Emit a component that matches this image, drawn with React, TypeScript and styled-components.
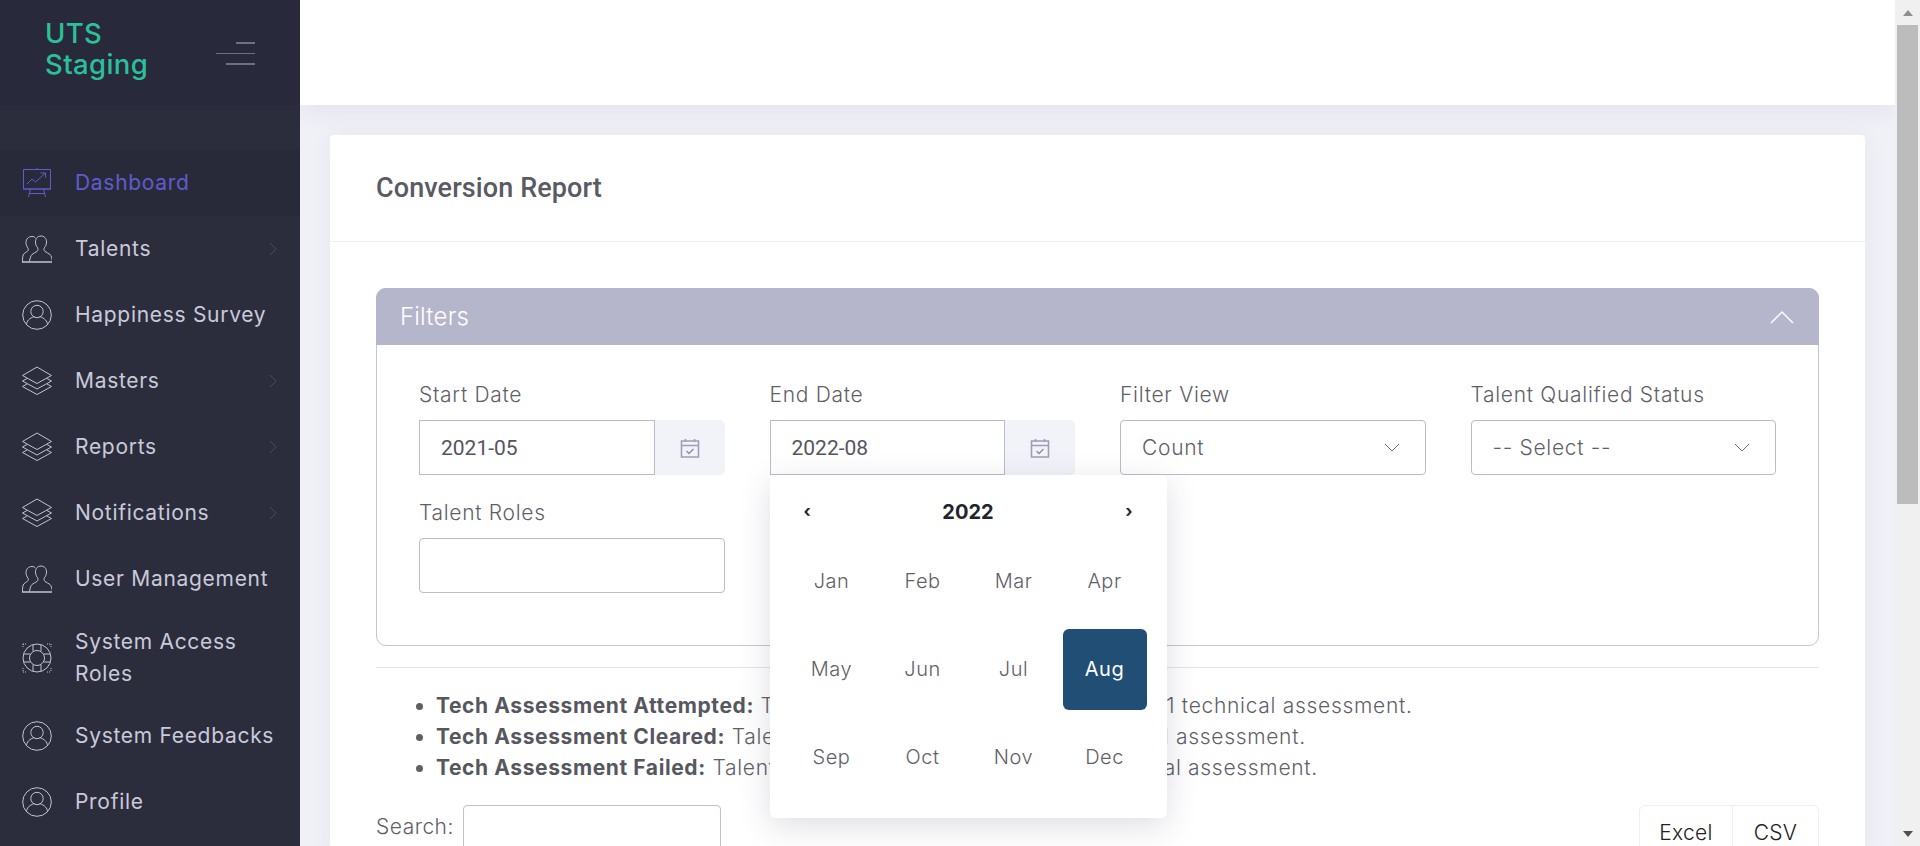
import styled, { createGlobalStyle } from "styled-components";
import { ReactNode } from "react";

const GlobalStyle = createGlobalStyle`
  html, body {
    margin: 0;
    height: 100%;
    overflow: hidden;
  }
  * {
    box-sizing: border-box;
  }
  body {
    font-family: "Inter", "Liberation Sans", sans-serif;
    color: #6a6a75;
  }
`;

const IconChart = () => (
  <svg width="30" height="30" viewBox="0 0 30 30" fill="none" stroke="#5f5ccb" strokeWidth="1">
    <path d="M1.500 1.500h27v19.500h-27zM15 0v1.500M1 21h28" />
    <path d="M5 16l5-5 3.500 3L23 5.500M18.500 5H23.500V9.500" />
    <path d="M8.500 21L6.500 29M21.500 21L23.500 29M7.500 25.500h15" />
  </svg>
);

const IconUsers = () => (
  <svg width="30" height="30" viewBox="0 0 30 30" fill="none" stroke="#c3c3d2" strokeWidth="1">
    <path d="M19 2c-3.200 0-5.500 2.400-5.500 6 0 2.600 1 4.600 2.200 5.800.5 1.300.3 2.800-.6 3.600-1.300 1.100-3.600 1.800-5 3-1.100.9-2.100 3.600-2.600 7" />
    <path d="M19 2c3.200 0 5.500 2.400 5.500 6 0 2.600-1 4.600-2.200 5.800-.5 1.300-.3 2.800.6 3.600 1.300 1.100 3.600 1.800 5 3 1.100.9 2.100 3.600 2.600 7" />
    <path d="M13.500 4c-1-1-2-1.500-3.500-1.500-3.500 0-6 2.500-6 6 0 2.600 1 4.400 2 5.500.5 1.200.3 2.500-.5 3.200C4.500 18.200 2 19 1.200 21 .6 22.500.5 25 .5 28" />
    <path d="M0 28h30" strokeWidth="1.500" />
  </svg>
);

const IconPerson = () => (
  <svg width="30" height="30" viewBox="0 0 30 30" fill="none" stroke="#c3c3d2" strokeWidth="1">
    <circle cx="15" cy="15" r="14.300" />
    <circle cx="15" cy="11.500" r="6.200" />
    <path d="M4.500 25c0-4 3-7 8-8.500M25.500 25c0-4-3-7-8-8.500" />
  </svg>
);

const IconLayers = () => (
  <svg width="30" height="30" viewBox="0 0 30 30" fill="none" stroke="#c3c3d2" strokeWidth="1">
    <path d="M15 1L29.500 9.500 15 17.500 0.500 9.500z" />
    <path d="M5 12.500L0.500 15 15 23 29.500 15 25 12.500" />
    <path d="M5 18L0.500 20.500 15 28.500 29.500 20.500 25 18" />
  </svg>
);

const IconLifebuoy = () => (
  <svg width="30" height="30" viewBox="0 0 30 30" fill="none" stroke="#c3c3d2" strokeWidth="1">
    <circle cx="15" cy="15" r="14" />
    <circle cx="15" cy="15" r="7.500" />
    <path d="M11 2v6M19 2v6M11 22v6M19 22v6M2 11h6M2 19h6M22 11h6M22 19h6" />
    <path d="M1 1h4M25 1h4M1 29h4M25 29h4M1 1v4M29 1v4M1 25v4M29 25v4" strokeDasharray="1 1" />
  </svg>
);

const IconCalendar = () => (
  <svg width="20" height="20" viewBox="0 0 20 20" fill="none" stroke="#a09db8" strokeWidth="1.600">
    <path d="M1.500 3h17v16h-17zM1.500 7.500h17" />
    <path d="M5.500 1v3M14.500 1v3" />
    <path d="M6.500 13l2.500 2.500L13.500 11" stroke="#8d8aa8" strokeWidth="1.400" />
  </svg>
);

const Chevron = () => (
  <svg width="16" height="9" viewBox="0 0 16 9" fill="none" stroke="#6a6a75" strokeWidth="1">
    <path d="M1 1l7 7 7-7" />
  </svg>
);

const NavArrow = () => (
  <svg width="8" height="14" viewBox="0 0 8 14" fill="none" stroke="#4a4b60" strokeWidth="1">
    <path d="M1 1l6 6-6 6" />
  </svg>
);

const navItems: { label: ReactNode; icon: ReactNode; arrow?: boolean; active?: boolean }[] = [
  { label: "Dashboard", icon: <IconChart />, active: true },
  { label: "Talents", icon: <IconUsers />, arrow: true },
  { label: "Happiness Survey", icon: <IconPerson /> },
  { label: "Masters", icon: <IconLayers />, arrow: true },
  { label: "Reports", icon: <IconLayers />, arrow: true },
  { label: "Notifications", icon: <IconLayers />, arrow: true },
  { label: "User Management", icon: <IconUsers /> },
  { label: "System Access Roles", icon: <IconLifebuoy /> },
  { label: "System Feedbacks", icon: <IconPerson /> },
  { label: "Profile", icon: <IconPerson /> },
];

const months = ["Jan", "Feb", "Mar", "Apr", "May", "Jun", "Jul", "Aug", "Sep", "Oct", "Nov", "Dec"];

export default function App() {
  return (
    <>
      <GlobalStyle />
      <Shell>
        <Sidebar>
          <Brand>
            <Logo>
              UTS
              <br />
              Staging
            </Logo>
            <Burger>
              <BurgerLine $width={19} $thick={2} />
              <BurgerLine $width={39} $thick={1} />
              <BurgerLine $width={29} $thick={2} />
            </Burger>
          </Brand>
          <Nav>
            {navItems.map((item, i) => (
              <NavItem key={i} $active={item.active}>
                <NavIcon>{item.icon}</NavIcon>
                <NavLabel>{item.label}</NavLabel>
                {item.arrow && (
                  <NavChevron>
                    <NavArrow />
                  </NavChevron>
                )}
              </NavItem>
            ))}
          </Nav>
        </Sidebar>
        <Main>
          <TopBar />
          <Content>
            <Card>
              <CardHead>Conversion Report</CardHead>
              <CardBody>
                <FilterBox>
                  <FilterHead>
                    Filters
                    <svg width="24" height="14" viewBox="0 0 24 14" fill="none" stroke="#fff" strokeWidth="1.500">
                      <path d="M1 13L12 2l11 11" />
                    </svg>
                  </FilterHead>
                  <FilterGrid>
                    <Field>
                      <Label>Start Date</Label>
                      <InputGroup>
                        <DateValue>2021-05</DateValue>
                        <Addon>
                          <IconCalendar />
                        </Addon>
                      </InputGroup>
                    </Field>
                    <Field>
                      <Label>End Date</Label>
                      <InputGroup>
                        <DateValue>2022-08</DateValue>
                        <Addon>
                          <IconCalendar />
                        </Addon>
                        <Picker>
                          <PickerHead>
                            <PickerNav>‹</PickerNav>
                            <PickerYear>2022</PickerYear>
                            <PickerNav>›</PickerNav>
                          </PickerHead>
                          <MonthGrid>
                            {months.map((m) => (
                              <Month key={m} $selected={m === "Aug"}>
                                {m}
                              </Month>
                            ))}
                          </MonthGrid>
                        </Picker>
                      </InputGroup>
                    </Field>
                    <Field>
                      <Label>Filter View</Label>
                      <SelectBox>
                        Count
                        <Chevron />
                      </SelectBox>
                    </Field>
                    <Field>
                      <Label>Talent Qualified Status</Label>
                      <SelectBox>
                        -- Select --
                        <Chevron />
                      </SelectBox>
                    </Field>
                    <Field>
                      <Label>Talent Roles</Label>
                      <SelectBox />
                    </Field>
                  </FilterGrid>
                </FilterBox>
                <Divider />
                <Notes>
                  <li>
                    <b>Tech Assessment Attempted:</b> Talents who have attempted in at least 1 technical assessment.
                  </li>
                  <li>
                    <b>Tech Assessment Cleared:</b> Talents who cleared at least one technical assessment.
                  </li>
                  <li>
                    <b>Tech Assessment Failed:</b> Talents who have failed in at least 1 technical assessment.
                  </li>
                </Notes>
                <TableTools>
                  <SearchLabel>
                    Search:
                    <SearchInput />
                  </SearchLabel>
                  <ExportGroup>
                    <ExportButton $width={92}>Excel</ExportButton>
                    <ExportButton $width={86}>CSV</ExportButton>
                  </ExportGroup>
                </TableTools>
              </CardBody>
            </Card>
          </Content>
        </Main>
        <ScrollTrack>
          <ScrollArrow>
            <ScrollTriangle $dim />
          </ScrollArrow>
          <ScrollThumb />
          <ScrollGap />
          <ScrollArrow>
            <ScrollTriangle $down />
          </ScrollArrow>
        </ScrollTrack>
      </Shell>
    </>
  );
}

const Shell = styled.div`
  display: flex;
  height: 846px;
  overflow: hidden;
  background: #f0f1f7;
`;

const Sidebar = styled.aside`
  width: 300px;
  flex: none;
  background: #2c2d3c;
`;

const Brand = styled.div`
  height: 105px;
  background: #28293a;
  display: flex;
  align-items: center;
  justify-content: space-between;
  padding: 0 45px 0 45px;
`;

const Logo = styled.div`
  color: #2bc09b;
  font-size: 27.500px;
  letter-spacing: 0.4px;
  line-height: 31px;
  font-weight: 500;
  margin-top: -8px;
`;

const Burger = styled.div`
  display: flex;
  flex-direction: column;
  align-items: flex-end;
  gap: 9px;
  margin-top: 1px;
`;

const BurgerLine = styled.span<{ $width: number; $thick: number }>`
  display: block;
  width: ${(p) => p.$width}px;
  height: ${(p) => p.$thick}px;
  background: #6f6f85;
`;

const Nav = styled.nav`
  padding-top: 45px;
`;

const NavItem = styled.div<{ $active?: boolean }>`
  display: flex;
  align-items: center;
  min-height: 66px;
  padding: 0 22px;
  color: ${(p) => (p.$active ? "#5f5ccb" : "#c9cadb")};
  background: ${(p) => (p.$active ? "#292a39" : "transparent")};
`;

const NavIcon = styled.span`
  display: flex;
  width: 30px;
  margin-right: 23px;
  flex: none;
`;

const NavLabel = styled.span`
  font-size: 21px;
  letter-spacing: 0.7px;
  line-height: 32px;
  flex: 1;
  padding: 13.500px 0;
`;

const NavChevron = styled.span`
  display: flex;
  margin-right: 1px;
`;

const Main = styled.main`
  flex: 1;
  min-width: 0;
  overflow: hidden;
`;

const TopBar = styled.header`
  position: relative;
  height: 105px;
  background: #fff;
  box-shadow: 0 4px 24px rgba(50, 50, 90, 0.08);
`;

const Content = styled.div`
  padding: 30px 30px 0 30px;
`;

const Card = styled.section`
  background: #fff;
  border-radius: 4px;
  box-shadow: 0 0 24px rgba(50, 50, 90, 0.05);
`;

const CardHead = styled.h1`
  margin: 0;
  height: 107px;
  padding: 0 46px;
  display: flex;
  align-items: center;
  font-family: "Roboto", sans-serif;
  font-size: 27px;
  letter-spacing: 0.1px;
  font-weight: 500;
  color: #5a5a63;
  border-bottom: 1px solid #eeeef3;
`;

const CardBody = styled.div`
  padding: 46px 46px 0 46px;
`;

const FilterBox = styled.div`
  border: 1px solid #c5c5d6;
  border-radius: 10px;
  height: 358px;
`;

const FilterHead = styled.div`
  margin: -1px -1px 0;
  height: 57px;
  padding: 0 25px 0 24px;
  display: flex;
  align-items: center;
  justify-content: space-between;
  background: #b5b5cb;
  border-radius: 10px 10px 0 0;
  color: #fff;
  font-size: 24px;
  letter-spacing: 0.2px;
  font-weight: 300;
`;

const FilterGrid = styled.div`
  display: grid;
  grid-template-columns: repeat(4, 1fr);
  column-gap: 45px;
  row-gap: 23px;
  padding: 35px 42px 0;
`;

const Field = styled.div`
  min-width: 0;
`;

const Label = styled.div`
  font-size: 21px;
  letter-spacing: 0.7px;
  line-height: 30px;
  font-weight: 300;
  margin-bottom: 10px;
  color: #5f5f68;
`;

const InputGroup = styled.div`
  position: relative;
  display: flex;
  height: 55px;
`;

const DateValue = styled.div`
  flex: 1;
  display: flex;
  align-items: center;
  padding-left: 21px;
  border: 1px solid #bbbbcb;
  font-family: "Roboto", sans-serif;
  font-size: 21px;
  color: #55555e;
`;

const Addon = styled.div`
  width: 70px;
  display: flex;
  align-items: center;
  justify-content: center;
  background: #f2f3f9;
  border-radius: 0 5px 5px 0;
`;

const Picker = styled.div`
  position: absolute;
  z-index: 5;
  top: 100%;
  left: 0;
  width: 397px;
  height: 343px;
  padding: 0 20px;
  background: #fff;
  border-radius: 6px;
  box-shadow: 0 8px 32px rgba(50, 50, 80, 0.16);
`;

const PickerHead = styled.div`
  height: 65.500px;
  display: flex;
  align-items: center;
  justify-content: space-between;
  padding: 8px 14px 0 14px;
`;

const PickerYear = styled.span`
  font-size: 20px;
  font-weight: 700;
  color: #212529;
`;

const PickerNav = styled.span`
  font-size: 17px;
  font-weight: 700;
  line-height: 1;
  color: #212529;
`;

const MonthGrid = styled.div`
  display: grid;
  grid-template-columns: repeat(4, 84px);
  grid-auto-rows: 81px;
  gap: 7px;
`;

const Month = styled.div<{ $selected?: boolean }>`
  display: flex;
  align-items: center;
  justify-content: center;
  font-size: 20px;
  letter-spacing: 0.5px;
  font-weight: ${(p) => (p.$selected ? 400 : 300)};
  border-radius: 6px;
  color: ${(p) => (p.$selected ? "#fff" : "#5f5f68")};
  background: ${(p) => (p.$selected ? "#204e74" : "transparent")};
`;

const SelectBox = styled.div`
  height: 55px;
  display: flex;
  align-items: center;
  justify-content: space-between;
  padding: 0 25px 0 21px;
  border: 1px solid #bbbbcb;
  border-radius: 4px;
  font-size: 21px;
  letter-spacing: 0.7px;
  font-weight: 300;
  color: #5f5f68;
`;

const Divider = styled.hr`
  margin: 21px 0 0;
  border: 0;
  border-top: 1px solid #e3e3ea;
`;

const Notes = styled.ul`
  margin: 22px 0 0;
  padding: 0 0 0 60px;
  font-size: 21px;
  letter-spacing: 0.7px;
  line-height: 31px;
  font-weight: 300;
  color: #5f5f68;

  b {
    font-weight: 700;
    letter-spacing: 0.6px;
    color: #57575f;
  }
`;

const TableTools = styled.div`
  display: flex;
  justify-content: space-between;
  margin-top: 22px;
`;

const SearchLabel = styled.label`
  display: flex;
  align-items: flex-start;
  gap: 9px;
  font-size: 21px;
  letter-spacing: 0.5px;
  line-height: 43px;
  font-weight: 300;
  color: #5f5f68;
  height: 55px;
`;

const SearchInput = styled.div`
  width: 258px;
  height: 55px;
  border: 1px solid #c0c0d0;
  border-radius: 4px;
`;

const ExportGroup = styled.div`
  display: flex;
  border: 1px solid #eeeef3;
  border-radius: 6px;
  height: 55px;
`;

const ExportButton = styled.div<{ $width: number }>`
  width: ${(p) => p.$width}px;
  display: flex;
  align-items: center;
  justify-content: center;
  font-size: 21px;
  letter-spacing: 0.3px;
  font-weight: 300;
  color: #222;

  & + & {
    border-left: 1px solid #eeeef3;
  }
`;

const ScrollTrack = styled.div`
  width: 25px;
  flex: none;
  display: flex;
  flex-direction: column;
  background: #f0f0f0;
`;

const ScrollArrow = styled.div`
  height: 25px;
  flex: none;
  display: flex;
  align-items: center;
  justify-content: center;
`;

const ScrollTriangle = styled.span<{ $down?: boolean; $dim?: boolean }>`
  width: 0;
  height: 0;
  border-left: 5.500px solid transparent;
  border-right: 5.500px solid transparent;
  ${(p) => (p.$down ? "border-top" : "border-bottom")}: 6px solid ${(p) => (p.$dim ? "#8f8f8f" : "#505050")};
`;

const ScrollThumb = styled.div`
  height: 479px;
  margin: 0 2px;
  background: #bcbcbc;
`;

const ScrollGap = styled.div`
  flex: 1;
`;
